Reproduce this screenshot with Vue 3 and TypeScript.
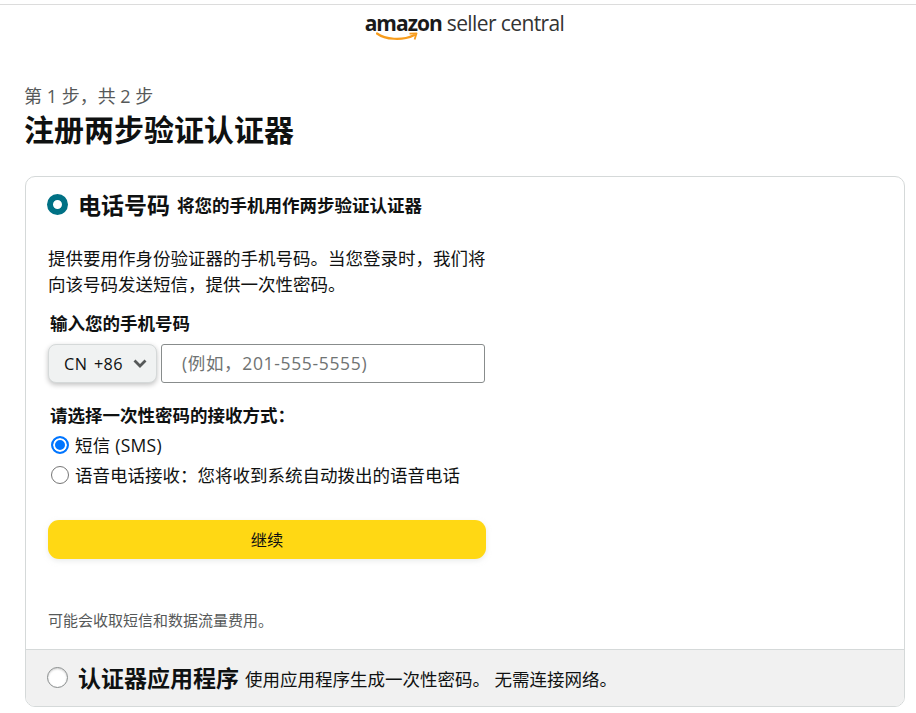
<script setup lang="ts">
const title: string = '注册两步验证认证器'
</script>

<template>
  <div class="page">
    <header class="top">
      <div class="logo">
        <span class="amz">amazon<svg class="smile" width="44" height="10" viewBox="0 0 44 10"><path d="M1 1.5C9 7.5 26 9 38 3.2" fill="none" stroke="#f79c1c" stroke-width="2.2" stroke-linecap="round"/><path d="M33.5 1.6L40.5 1.4L38.6 7.4" fill="none" stroke="#f79c1c" stroke-width="1.8" stroke-linejoin="round"/></svg></span>
        <span class="sc">seller central</span>
      </div>
    </header>
    <main class="main">
      <div class="step">第 1 步，共 2 步</div>
      <h1 class="title">{{ title }}</h1>
      <section class="card">
        <div class="panel">
          <div class="head">
            <span class="ring"></span>
            <span class="h-big">电话号码</span>
            <span class="h-sub">将您的手机用作两步验证认证器</span>
          </div>
          <div class="form">
            <p class="desc">提供要用作身份验证器的手机号码。当您登录时，我们将向该号码发送短信，提供一次性密码。</p>
            <div class="label lab1">输入您的手机号码</div>
            <div class="phone">
              <div class="cc">
                <span class="cc-text">CN +86</span>
                <svg width="14" height="9" viewBox="0 0 14 9"><path d="M1.5 1.5L7 7L12.5 1.5" fill="none" stroke="#565959" stroke-width="2.8"/></svg>
              </div>
              <div class="inp">(例如，201-555-5555)</div>
            </div>
            <div class="label lab2">请选择一次性密码的接收方式：</div>
            <div class="opt opt1"><span class="r on"></span><span class="sms">短信 (SMS)</span></div>
            <div class="opt"><span class="r"></span>语音电话接收：您将收到系统自动拨出的语音电话</div>
            <button class="btn" type="button">继续</button>
            <div class="fine">可能会收取短信和数据流量费用。</div>
          </div>
        </div>
        <div class="panel2">
          <span class="ring2"></span>
          <span class="h-big">认证器应用程序</span>
          <span class="h-sub2">使用应用程序生成一次性密码。 无需连接网络。</span>
        </div>
      </section>
    </main>
  </div>
</template>

<style>
html, body { margin: 0; background: #fff; overflow: hidden; }
</style>

<style scoped>
.page {
  width: 916px;
  height: 713px;
  overflow: hidden;
  box-sizing: border-box;
  font-family: "Open Sans", "Noto Sans CJK SC", sans-serif;
  color: #0f1111;
}
.top {
  margin-top: 4px;
  border-top: 1px solid #dcdcdc;
  height: 40px;
  display: flex;
  justify-content: center;
}
.logo { display: flex; align-items: flex-start; gap: 5px; margin-left: 13px; padding-top: 5px; }
.amz {
  position: relative;
  font-family: "Open Sans", sans-serif;
  font-weight: 700;
  font-size: 21px;
  line-height: 26px;
  letter-spacing: -1px;
  color: #1a1a1a;
}
.smile { position: absolute; left: 11px; top: 22px; }
.sc {
  font-family: "Open Sans", sans-serif;
  font-size: 21px;
  line-height: 26px;
  letter-spacing: -.6px;
  color: #333;
}
.main { padding: 39px 11px 0 25px; }
.step { font-size: 18px; line-height: 24px; color: #565959; margin-left: -1px; }
.title { margin: 4px 0 0 -1px; font-size: 30px; line-height: 36px; font-weight: 700; color: #0f1111; }
.card {
  margin-top: 28px;
  width: 880px;
  height: 531px;
  box-sizing: border-box;
  border: 1px solid #d5d9d9;
  border-radius: 10px;
  overflow: hidden;
  display: flex;
  flex-direction: column;
}
.panel { flex: 1; min-height: 0; }
.head { display: flex; align-items: center; padding: 13px 0 0 21px; height: 30px; box-sizing: content-box; }
.ring {
  width: 21px;
  height: 21px;
  box-sizing: border-box;
  border: 6px solid #007185;
  border-radius: 50%;
  margin-top: -2px;
  background: #fff;
  flex: none;
}
.h-big { font-size: 23px; font-weight: 700; margin-left: 10px; line-height: 30px; }
.h-sub { font-size: 17.5px; font-weight: 700; margin-left: 7px; line-height: 30px; }
.form { width: 438px; margin-left: 22px; }
.desc { margin: 25px 0 0; font-size: 17.5px; line-height: 26px; color: #0f1111; }
.label { font-size: 17.5px; font-weight: 700; line-height: 22px; margin-left: 2px; }
.lab1 { margin-top: 15px; }
.lab2 { margin-top: 21px; }
.phone { display: flex; gap: 4px; margin-top: 10px; }
.cc {
  width: 109px;
  height: 39px;
  box-sizing: border-box;
  border: 1px solid #d5d9d9;
  border-radius: 8px;
  background: #f0f2f2;
  box-shadow: 0 2px 5px rgba(15, 17, 17, .25);
  display: flex;
  align-items: center;
  justify-content: space-between;
  padding: 0 9px 0 15px;
  font-size: 16.25px;
}
.cc-text { letter-spacing: .4px; word-spacing: 2px; }
.inp {
  width: 324px;
  height: 39px;
  box-sizing: border-box;
  border: 1px solid #888c8c;
  border-radius: 3px;
  font-size: 17.5px;
  letter-spacing: .65px;
  line-height: 37px;
  padding-left: 20px;
  color: #6f7373;
  white-space: nowrap;
}
.opt { display: flex; align-items: center; font-size: 17.5px; line-height: 30px; margin-left: 3px; }
.opt1 { margin-top: 4px; }
.sms { letter-spacing: .25px; }
.r {
  width: 18px;
  height: 18px;
  box-sizing: border-box;
  border: 1px solid #767676;
  border-radius: 50%;
  margin-right: 6px;
  flex: none;
}
.r.on { border: 2px solid #0075ff; background: #0075ff; box-shadow: inset 0 0 0 2px #fff; }
.btn {
  display: block;
  width: 438px;
  height: 39px;
  margin-top: 30px;
  padding: 0 0 2px;
  border: 0;
  border-radius: 11px;
  background: #ffd814;
  box-shadow: 0 2px 5px rgba(213, 217, 217, .5);
  font-family: inherit;
  font-size: 16.25px;
  color: #0f1111;
}
.fine { margin-top: 51px; font-size: 15px; line-height: 20px; color: #565959; white-space: nowrap; }
.panel2 {
  height: 57px;
  flex: none;
  box-sizing: border-box;
  border-top: 1px solid #d5d9d9;
  background: #f1f1f1;
  display: flex;
  align-items: center;
  padding: 0 0 0 21px;
}
.ring2 {
  width: 21px;
  height: 21px;
  box-sizing: border-box;
  border: 1px solid #888c8c;
  border-radius: 50%;
  background: #fff;
  box-shadow: inset 0 1px 2px rgba(15, 17, 17, .2);
  flex: none;
  margin-top: -2px;
}
.h-sub2 { font-size: 17.5px; margin-left: 6px; line-height: 30px; padding-top: 1px; }
</style>
